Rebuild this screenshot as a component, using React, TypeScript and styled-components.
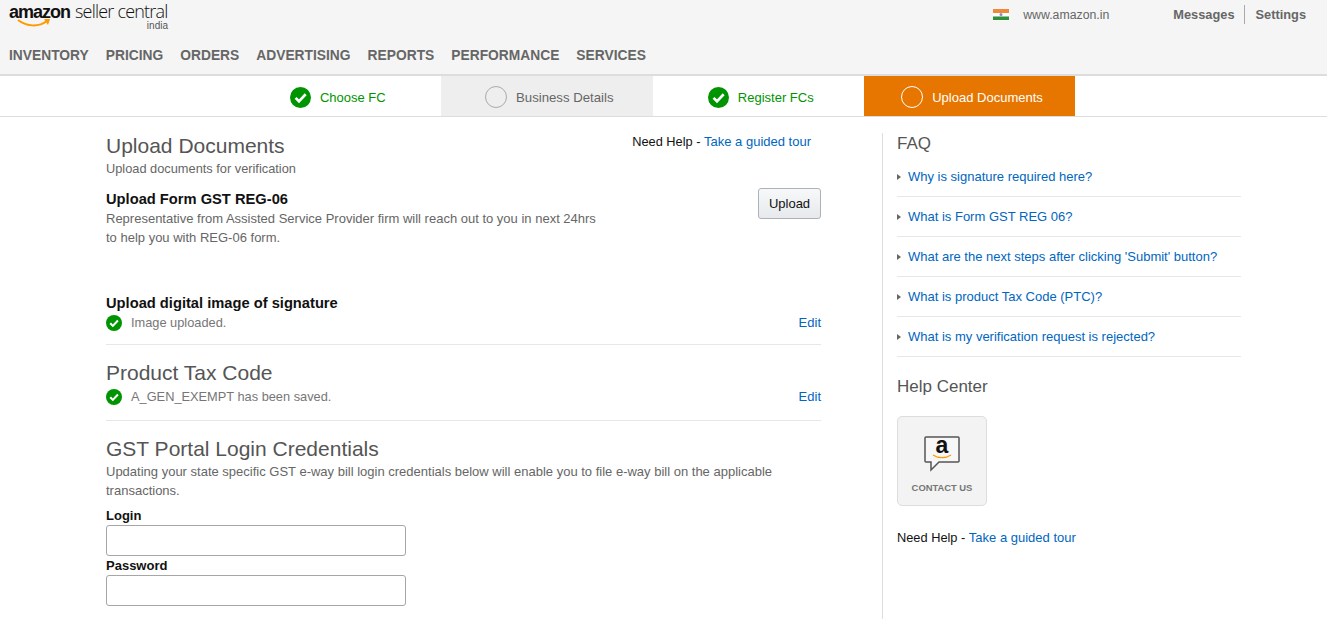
import React from 'react';
import styled, { createGlobalStyle } from 'styled-components';

const GlobalStyle = createGlobalStyle`
  html, body {
    margin: 0;
    padding: 0;
    background: #ffffff;
    font-family: "Liberation Sans", Arial, sans-serif;
    font-size: 13px;
    color: #111111;
    overflow: hidden;
  }
`;

const Page = styled.div`
  width: 1327px;
  height: 619px;
  overflow: hidden;
`;

const Header = styled.header`
  height: 74px;
  background: #f5f5f5;
  border-bottom: 2px solid #dddddd;
  display: flex;
  flex-direction: column;
`;

const TopRow = styled.div`
  height: 38px;
  display: flex;
  justify-content: space-between;
  padding: 0 21px 0 9px;
`;

const Logo = styled.div`
  position: relative;
  width: 160px;
  height: 30px;
  display: flex;
  align-items: baseline;
  white-space: nowrap;
  color: #111111;
`;

const LogoBrand = styled.span`
  font-size: 18px;
  line-height: 22px;
  font-weight: 700;
  letter-spacing: -1px;
`;

const LogoName = styled.span`
  font-family: "Open Sans", sans-serif;
  font-size: 18px;
  line-height: 22px;
  font-weight: 300;
  letter-spacing: -0.8px;
  margin-left: 5px;
`;

const LogoRegion = styled.span`
  position: absolute;
  right: 1px;
  top: 21px;
  font-size: 10px;
  line-height: 10px;
  color: #555555;
`;

const LogoSmile = styled.svg`
  position: absolute;
  left: 8px;
  top: 18px;
`;

const TopRight = styled.div`
  display: flex;
  align-items: center;
  height: 29px;
`;

const Flag = styled.svg`
  display: block;
  margin-right: 14px;
`;

const Site = styled.span`
  font-size: 12.3px;
  color: #666666;
  margin-right: 64px;
`;

const TopLink = styled.span`
  font-size: 12.8px;
  font-weight: 700;
  color: #666666;
`;

const TopDivider = styled.span`
  width: 1px;
  height: 19px;
  background: #aaaaaa;
  margin: 0 11px 0 9px;
`;

const Nav = styled.nav`
  display: flex;
  gap: 17px;
  padding-left: 9px;
  height: 34px;
  align-items: center;
`;

const NavItem = styled.span`
  font-size: 13.8px;
  font-weight: 700;
  color: #666666;
`;

const Steps = styled.div`
  height: 40px;
  border-bottom: 1px solid #dddddd;
  display: flex;
  padding-left: 229.5px;
`;

const Step = styled.div<{ $state: 'done' | 'idle' | 'active' }>`
  box-sizing: border-box;
  width: 211.5px;
  padding: 2px 0 0 5px;
  display: flex;
  align-items: center;
  justify-content: center;
  gap: 9px;
  font-size: ${(p) => (p.$state === 'idle' ? '13.2px' : '13px')};
  background: ${(p) =>
    p.$state === 'active' ? '#e77600' : p.$state === 'idle' ? '#eeeeee' : '#ffffff'};
  color: ${(p) =>
    p.$state === 'active' ? '#ffffff' : p.$state === 'idle' ? '#666666' : '#009400'};

  &:last-child {
    width: 211px;
  }
`;

const Ring = styled.span<{ $light?: boolean }>`
  width: 20px;
  height: 20px;
  border-radius: 50%;
  border: 1px solid ${(p) => (p.$light ? '#ffffff' : '#aaaaaa')};
`;

const Main = styled.main`
  display: flex;
  padding: 16px 0 0 106px;
`;

const Left = styled.section`
  width: 715px;
  flex-shrink: 0;
`;

const Right = styled.aside`
  margin-left: 61px;
  padding-left: 14px;
  width: 344px;
  height: 486px;
  border-left: 1px solid #dddddd;
`;

const TitleRow = styled.div`
  display: flex;
  justify-content: space-between;
  padding-right: 10px;
`;

const H1 = styled.h1`
  margin: 0;
  font-size: 21px;
  font-weight: 400;
  line-height: 26px;
  color: #555555;
`;

const Muted = styled.p`
  margin: 0;
  font-size: 12.8px;
  line-height: 19px;
  color: #666666;
`;

const LongNote = styled(Muted)<{ $width: number }>`
  font-size: 13px;
  max-width: ${(p) => p.$width}px;
`;

const Help = styled.div`
  font-size: 12.8px;
  line-height: 18px;
  color: #111111;
`;

const Link = styled.a`
  color: #0066c0;
  font-size: 13px;
`;

const SubTitle = styled.h2`
  margin: 0;
  font-size: 14.7px;
  font-weight: 700;
  line-height: 20px;
  color: #111111;
`;

const UploadRow = styled.div`
  display: flex;
  justify-content: space-between;
  align-items: flex-start;
  margin-top: 11px;
`;

const UploadButton = styled.button`
  width: 63px;
  height: 31px;
  margin-top: -1px;
  padding: 0;
  border: 1px solid #adb1b8;
  border-radius: 3px;
  background: linear-gradient(#f7f8fa, #e7e9ec);
  font-family: inherit;
  font-size: 13px;
  color: #111111;
`;

const Section = styled.div<{ $top: number; $bottom: number }>`
  margin-top: ${(p) => p.$top}px;
  padding-bottom: ${(p) => p.$bottom}px;
  border-bottom: 1px solid #e7e7e7;
`;

const StatusRow = styled.div<{ $offset?: number }>`
  display: flex;
  align-items: center;
  height: 19px;
  margin-top: ${(p) => p.$offset ?? 0}px;
`;

const StatusText = styled.span`
  flex: 1;
  margin-left: 9px;
  font-size: 12.8px;
  color: #767676;
`;

const CredBlock = styled.div`
  margin-top: 15px;
`;

const FieldLabel = styled.label`
  display: block;
  margin-bottom: 2px;
  font-size: 13px;
  font-weight: 700;
  line-height: 15px;
  color: #111111;
`;

const LoginLabel = styled(FieldLabel)`
  margin-top: 8px;
`;

const Input = styled.input`
  display: block;
  box-sizing: border-box;
  width: 300px;
  height: 31px;
  margin-bottom: 2px;
  border: 1px solid #a6a6a6;
  border-radius: 3px;
  background: #ffffff;
`;

const SideTitle = styled.h3`
  margin: 0;
  font-size: 17px;
  font-weight: 400;
  line-height: 22px;
  color: #555555;
`;

const FaqList = styled.ul`
  list-style: none;
  margin: 2px 0 0;
  padding: 0;
`;

const FaqItem = styled.li`
  height: 39px;
  border-bottom: 1px solid #e7e7e7;
  display: flex;
  align-items: center;
  gap: 7px;
`;

const Arrow = styled.span`
  width: 0;
  height: 0;
  border-left: 4px solid #666666;
  border-top: 3px solid transparent;
  border-bottom: 3px solid transparent;
`;

const HelpTitle = styled(SideTitle)`
  margin-top: 19px;
`;

const ContactCard = styled.div`
  box-sizing: border-box;
  width: 90px;
  height: 90px;
  margin-top: 18px;
  border: 1px solid #dddddd;
  border-radius: 5px;
  background: #f3f3f3;
  display: flex;
  flex-direction: column;
  align-items: center;
  padding-top: 13px;
`;

const ContactLabel = styled.span`
  margin-top: 10px;
  font-size: 9.4px;
  font-weight: 700;
  color: #767676;
`;

const SideHelp = styled(Help)`
  margin-top: 23px;
`;

const Check = ({ size }: { size: number }) => (
  <svg width={size} height={size} viewBox="0 0 22 22">
    <circle cx="11" cy="11" r="11" fill="#009400" />
    <path d="M5.8 11.4l3.6 3.6 7-7.4" fill="none" stroke="#ffffff" strokeWidth="2.8" />
  </svg>
);

const navItems = ['INVENTORY', 'PRICING', 'ORDERS', 'ADVERTISING', 'REPORTS', 'PERFORMANCE', 'SERVICES'];

const faqs = [
  'Why is signature required here?',
  'What is Form GST REG 06?',
  "What are the next steps after clicking 'Submit' button?",
  'What is product Tax Code (PTC)?',
  'What is my verification request is rejected?',
];

export default function App() {
  return (
    <Page>
      <GlobalStyle />
      <Header>
        <TopRow>
          <Logo>
            <LogoBrand>amazon</LogoBrand>
            <LogoName>seller central</LogoName>
            <LogoRegion>india</LogoRegion>
            <LogoSmile width="34" height="10" viewBox="0 0 34 10">
              <path d="M1 2c9 7 21 7 29 1" fill="none" stroke="#f90" strokeWidth="2" />
              <path d="M27 1l6 0-2 6z" fill="#f90" />
            </LogoSmile>
          </Logo>
          <TopRight>
            <Flag width="16" height="11" viewBox="0 0 16 11">
              <rect width="16" height="4" fill="#f0883a" />
              <rect y="4" width="16" height="3.5" fill="#ffffff" />
              <rect y="7.5" width="16" height="3.5" fill="#2f8f3a" />
              <circle cx="8" cy="5.5" r="1.5" fill="#8a8ac0" />
            </Flag>
            <Site>www.amazon.in</Site>
            <TopLink>Messages</TopLink>
            <TopDivider />
            <TopLink>Settings</TopLink>
          </TopRight>
        </TopRow>
        <Nav>
          {navItems.map((item) => (
            <NavItem key={item}>{item}</NavItem>
          ))}
        </Nav>
      </Header>

      <Steps>
        <Step $state="done">
          <Check size={21} />
          Choose FC
        </Step>
        <Step $state="idle">
          <Ring />
          Business Details
        </Step>
        <Step $state="done">
          <Check size={21} />
          Register FCs
        </Step>
        <Step $state="active">
          <Ring $light />
          Upload Documents
        </Step>
      </Steps>

      <Main>
        <Left>
          <TitleRow>
            <div>
              <H1>Upload Documents</H1>
              <Muted>Upload documents for verification</Muted>
            </div>
            <Help>
              Need Help - <Link>Take a guided tour</Link>
            </Help>
          </TitleRow>

          <UploadRow>
            <div>
              <SubTitle>Upload Form GST REG-06</SubTitle>
              <LongNote $width={495}>
                Representative from Assisted Service Provider firm will reach out to you in next 24hrs
                to help you with REG-06 form.
              </LongNote>
            </div>
            <UploadButton>Upload</UploadButton>
          </UploadRow>

          <Section $top={46} $bottom={12}>
            <SubTitle>Upload digital image of signature</SubTitle>
            <StatusRow>
              <Check size={16} />
              <StatusText>Image uploaded.</StatusText>
              <Link>Edit</Link>
            </StatusRow>
          </Section>

          <Section $top={15} $bottom={14}>
            <H1>Product Tax Code</H1>
            <StatusRow $offset={1}>
              <Check size={16} />
              <StatusText>A_GEN_EXEMPT has been saved.</StatusText>
              <Link>Edit</Link>
            </StatusRow>
          </Section>

          <CredBlock>
            <H1>GST Portal Login Credentials</H1>
            <LongNote $width={680}>
              Updating your state specific GST e-way bill login credentials below will enable you to file e-way bill on
              the applicable transactions.
            </LongNote>
            <LoginLabel>Login</LoginLabel>
            <Input />
            <FieldLabel>Password</FieldLabel>
            <Input />
          </CredBlock>
        </Left>

        <Right>
          <SideTitle>FAQ</SideTitle>
          <FaqList>
            {faqs.map((faq) => (
              <FaqItem key={faq}>
                <Arrow />
                <Link>{faq}</Link>
              </FaqItem>
            ))}
          </FaqList>
          <HelpTitle>Help Center</HelpTitle>
          <ContactCard>
            <svg width="36" height="42" viewBox="0 -6 36 42">
              <path d="M2 1h32a1 1 0 0 1 1 1v23a1 1 0 0 1-1 1H15l-8 8v-8H2a1 1 0 0 1-1-1V2a1 1 0 0 1 1-1z" fill="#f7f7f7" stroke="#555555" strokeWidth="1.5" />
              <text x="18" y="17" textAnchor="middle" fontFamily="Liberation Sans" fontWeight="700" fontSize="23" fill="#111111">a</text>
              <path d="M9 19c5 3.5 13 3.5 18 0" fill="none" stroke="#f90" strokeWidth="1.2" />
            </svg>
            <ContactLabel>CONTACT US</ContactLabel>
          </ContactCard>
          <SideHelp>
            Need Help - <Link>Take a guided tour</Link>
          </SideHelp>
        </Right>
      </Main>
    </Page>
  );
}
